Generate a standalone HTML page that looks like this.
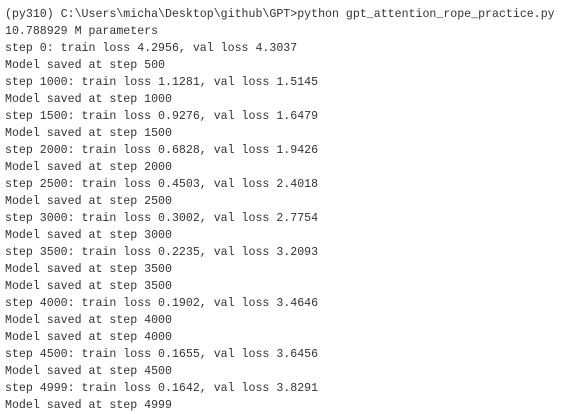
<!DOCTYPE html>
<html><head><meta charset="utf-8"><style>
html,body{margin:0;padding:0;background:#fff;width:568px;height:413px;overflow:hidden}
pre{margin:0;position:absolute;left:5px;top:-11px;font-family:"Liberation Mono",monospace;font-size:11.6px;line-height:17px;color:#333;}
.m{position:absolute;left:0;top:0;width:568px;height:3px;background:#fff}
</style></head><body><pre>(py310) C:\Users\micha\Desktop\github\GPT>python gpt_attention_rope_practice.py
(py310) C:\Users\micha\Desktop\github\GPT>python gpt_attention_rope_practice.py
10.788929 M parameters
step 0: train loss 4.2956, val loss 4.3037
Model saved at step 500
step 1000: train loss 1.1281, val loss 1.5145
Model saved at step 1000
step 1500: train loss 0.9276, val loss 1.6479
Model saved at step 1500
step 2000: train loss 0.6828, val loss 1.9426
Model saved at step 2000
step 2500: train loss 0.4503, val loss 2.4018
Model saved at step 2500
step 3000: train loss 0.3002, val loss 2.7754
Model saved at step 3000
step 3500: train loss 0.2235, val loss 3.2093
Model saved at step 3500
Model saved at step 3500
step 4000: train loss 0.1902, val loss 3.4646
Model saved at step 4000
Model saved at step 4000
step 4500: train loss 0.1655, val loss 3.6456
Model saved at step 4500
step 4999: train loss 0.1642, val loss 3.8291
Model saved at step 4999</pre><div class="m"></div></body></html>
